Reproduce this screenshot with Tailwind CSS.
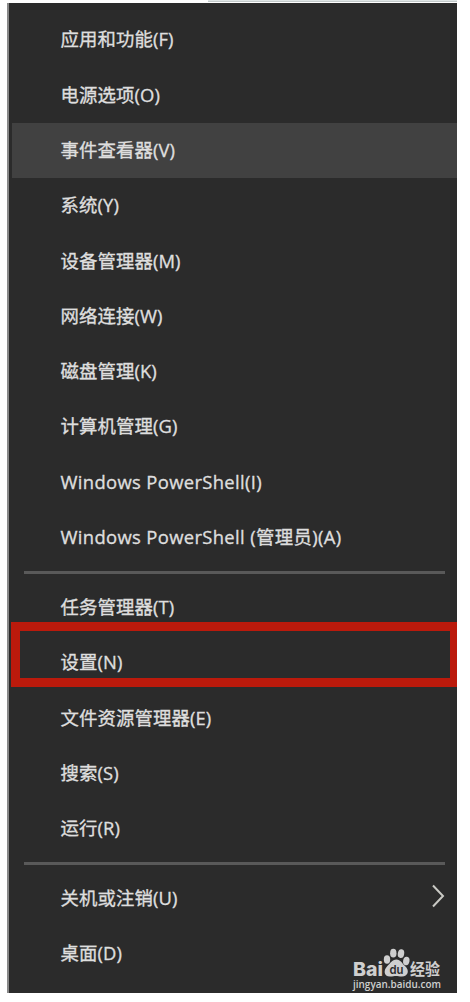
<!DOCTYPE html>
<html lang="zh-CN">
<head>
    <meta charset="UTF-8">
    <meta name="viewport" content="width=device-width, initial-scale=1.0">
    <title>开始菜单</title>
    <script src="https://cdn.jsdelivr.net/npm/@tailwindcss/browser@4"></script>
</head>
<body class="bg-white w-[470px] h-[1002px] overflow-hidden">
    <div class="ml-[208px] w-[249px] h-[2px] mb-px bg-[#dfe5e5] border-b border-[#c3caca]"></div>

    <div class="relative ml-[7px] w-[450px] h-[990px] bg-[#2b2b2b] border-l-2 border-[#888888] pt-[9px] text-[#dedede] text-[18.4px] tracking-[0.1px] whitespace-nowrap font-['Open_Sans','Noto_Sans_CJK_SC',sans-serif]">
        <ul class="[-webkit-text-stroke:0.35px_#dedede]">
            <li class="h-[55.3px] pl-[51.5px] pb-px flex items-center"><span>应用和功能(F)</span></li>
            <li class="h-[55.3px] pl-[51.5px] pb-px flex items-center"><span>电源选项(O)</span></li>
            <li class="h-[55.3px] ml-[3px] pl-[48.5px] pb-px flex items-center bg-[#414141]"><span>事件查看器(V)</span></li>
            <li class="h-[55.3px] pl-[51.5px] pb-px flex items-center"><span>系统(Y)</span></li>
            <li class="h-[55.3px] pl-[51.5px] pb-px flex items-center"><span>设备管理器(M)</span></li>
            <li class="h-[55.3px] pl-[51.5px] pb-px flex items-center"><span>网络连接(W)</span></li>
            <li class="h-[55.3px] pl-[51.5px] pb-px flex items-center"><span>磁盘管理(K)</span></li>
            <li class="h-[55.3px] pl-[51.5px] pb-px flex items-center"><span>计算机管理(G)</span></li>
            <li class="h-[55.3px] pl-[51.5px] pb-px flex items-center tracking-[0.35px]"><span>Windows PowerShell(I)</span></li>
            <li class="h-[55.3px] pl-[51.5px] pb-px flex items-center tracking-[0.35px]"><span>Windows PowerShell (管理员)(A)</span></li>
        </ul>
        <div class="h-[14.6px] pl-[15px] pr-3 flex items-center">
            <div class="w-full h-[3px] bg-[#595959]"></div>
        </div>
        <ul class="[-webkit-text-stroke:0.35px_#dedede]">
            <li class="h-[55.3px] pl-[51.5px] pb-px flex items-center"><span>任务管理器(T)</span></li>
            <li class="relative h-[55.3px] pl-[51.5px] pb-px flex items-center">
                <span>设置(N)</span>
                <div class="absolute left-[1.5px] right-0 top-[-13px] h-[65px] border-[9px] border-r-[7px] border-[#bb1a0c]"></div>
            </li>
            <li class="h-[55.3px] pl-[51.5px] pb-px flex items-center"><span>文件资源管理器(E)</span></li>
            <li class="h-[55.3px] pl-[51.5px] pb-px flex items-center"><span>搜索(S)</span></li>
            <li class="h-[55.3px] pl-[51.5px] pb-px flex items-center"><span>运行(R)</span></li>
        </ul>
        <div class="h-[14.6px] pl-[15px] pr-3 flex items-center">
            <div class="w-full h-[3px] bg-[#595959]"></div>
        </div>
        <ul class="[-webkit-text-stroke:0.35px_#dedede]">
            <li class="h-[55.3px] pl-[51.5px] pb-px pr-3 flex items-center justify-between">
                <span>关机或注销(U)</span>
                <svg class="w-[14px] h-[24px] mb-[3px]" viewBox="0 0 14 24" fill="none" stroke="#c9c9c4" stroke-width="2">
                    <path d="M2 1.5 L12 12 L2 22.5"/>
                </svg>
            </li>
            <li class="h-[55.3px] pl-[51.5px] pb-px flex items-center"><span>桌面(D)</span></li>
        </ul>

        <!-- 水印 -->
        <svg class="absolute left-[343px] top-[943px] w-[92px] h-[46px] overflow-visible tracking-normal" viewBox="0 0 92 46" fill="#cfcfcf">
            <text x="1" y="29.5" font-family="Inter" font-weight="800" font-size="19" textLength="30" lengthAdjust="spacingAndGlyphs">Bai</text>
            <ellipse cx="35" cy="13.5" rx="3.2" ry="4.2"/>
            <ellipse cx="41.3" cy="7.2" rx="3.2" ry="4.4"/>
            <ellipse cx="49" cy="7.6" rx="3.2" ry="4.4" transform="rotate(10 49 7.6)"/>
            <ellipse cx="54.3" cy="15" rx="3.2" ry="4.2" transform="rotate(10 54.3 15)"/>
            <path d="M44.5 13.5 C48.5 13.5 50 17.5 53 20 C58 24.5 56 30.5 50 30.5 C47 30.5 46 30 44 30 C42 30 41 30.5 38 30.5 C31.5 30.5 31.5 24 35 20.5 C38 17.5 40 13.5 44.5 13.5 Z"/>
            <text x="37.5" y="28" fill="#2b2b2b" font-family="Inter" font-weight="600" font-size="12" textLength="14" lengthAdjust="spacingAndGlyphs">du</text>
            <text x="58" y="28.5" font-family="Noto Sans CJK SC" font-weight="700" font-size="15.5" textLength="30" lengthAdjust="spacingAndGlyphs">经验</text>
            <text x="1" y="41.5" font-family="Open Sans" font-weight="600" font-size="10.5" textLength="88" lengthAdjust="spacingAndGlyphs">jingyan.baidu.com</text>
        </svg>
    </div>
</body>
</html>
